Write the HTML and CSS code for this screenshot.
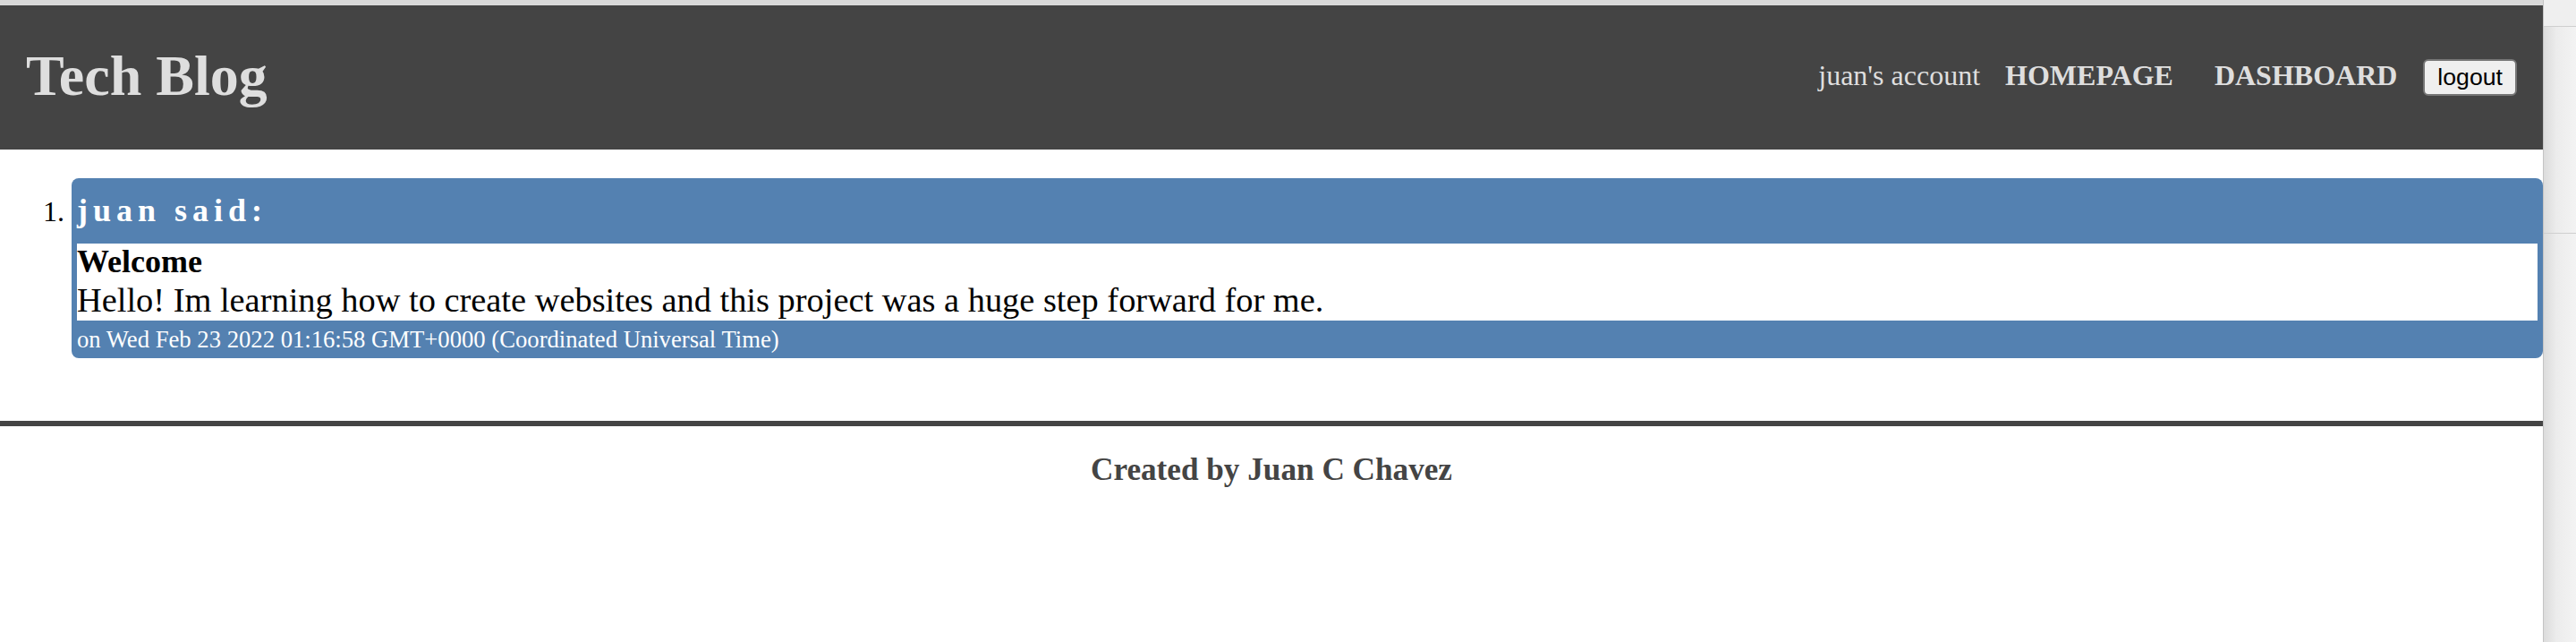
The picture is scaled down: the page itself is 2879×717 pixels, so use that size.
FILE: index.html
```html
<!DOCTYPE html>
<html lang="en">
<head>
<meta charset="utf-8">
<title>Tech Blog</title>
<link rel="stylesheet" href="styles.css">
</head>
<body>
<div class="window">
  <div class="page">
    <div class="topstrip"></div>
    <header class="site-header">
      <h1 class="site-title">Tech Blog</h1>
      <nav class="site-nav">
        <span class="account">juan's account</span>
        <a class="nav-link nav-home" href="#">HOMEPAGE</a>
        <a class="nav-link nav-dash" href="#">DASHBOARD</a>
        <button class="logout" type="button">logout</button>
      </nav>
    </header>
    <main class="content">
      <ol class="posts">
        <li class="post">
          <div class="post-head">juan said:</div>
          <div class="post-body">
            <div class="post-title">Welcome</div>
            <div class="post-text">Hello! Im learning how to create websites and this project was a huge step forward for me.</div>
          </div>
          <div class="post-date">on Wed Feb 23 2022 01:16:58 GMT+0000 (Coordinated Universal Time)</div>
        </li>
      </ol>
    </main>
    <footer class="site-footer">
      <h3 class="credit">Created by Juan C Chavez</h3>
    </footer>
  </div>
  <div class="scrollbar">
    <div class="sb-top"></div>
    <div class="sb-thumb"></div>
    <div class="sb-rest"></div>
  </div>
</div>
</body>
</html>
```

FILE: styles.css
```css
html, body {
  margin: 0;
  padding: 0;
  background: #ffffff;
}

body {
  font-family: "Liberation Serif", "Times New Roman", serif;
  font-size: 32px;
  color: #000;
}

.window {
  display: flex;
  height: 717px;
  overflow: hidden;
}

.page {
  flex: 1;
  min-width: 0;
  display: flex;
  flex-direction: column;
}

.topstrip {
  height: 6px;
  background: #d9d9d9;
}

.site-header {
  height: 161px;
  background: #444444;
  display: flex;
  justify-content: space-between;
  align-items: flex-start;
  padding: 0 29px 0 29px;
  box-sizing: border-box;
}

.site-title {
  margin: 43px 0 0 0;
  font-size: 64px;
  line-height: 72px;
  font-weight: bold;
  color: #dedede;
}

.site-nav {
  display: flex;
  align-items: flex-start;
  margin-top: 60px;
}

.account {
  color: #dedede;
  font-size: 32px;
  line-height: 37px;
  margin-right: 28px;
}

.nav-link {
  color: #dedede;
  font-size: 32px;
  line-height: 37px;
  font-weight: bold;
  text-decoration: none;
}

.nav-home {
  margin-right: 46px;
}

.nav-dash {
  margin-right: 29px;
}

.logout {
  height: 41px;
  box-sizing: border-box;
  padding: 0 14px;
  margin: 0;
  font-family: "Liberation Sans", Arial, sans-serif;
  font-size: 26.67px;
  color: #000;
  background: #efefef;
  border: 2px solid #767676;
  border-radius: 6px;
}

.content {
  display: block;
}

.posts {
  margin: 32px 0 70px 0;
  padding: 0 0 0 80px;
  list-style: decimal;
}

.post {
  background: #5481b1;
  border-radius: 8px;
  padding: 6px;
  font-size: 32px;
}

.post-head {
  color: #ffffff;
  font-weight: bold;
  font-size: 36px;
  line-height: 37px;
  letter-spacing: 6px;
  padding: 12px 0 18px 0;
}

.post-body {
  background: #ffffff;
}

.post-title {
  font-weight: bold;
  font-size: 36px;
  line-height: 40px;
}

.post-text {
  font-size: 38.4px;
  line-height: 46px;
}

.post-date {
  color: #ffffff;
  font-size: 26.67px;
  line-height: 30px;
  padding-top: 6px;
}

.site-footer {
  border-top: 6px solid #444444;
  padding-top: 27px;
  text-align: center;
}

.credit {
  margin: 0;
  font-size: 35.2px;
  line-height: 43px;
  font-weight: bold;
  color: #444444;
}

.scrollbar {
  width: 37px;
  display: flex;
  flex-direction: column;
  border-left: 1px solid #c4c4c4;
  box-sizing: border-box;
}

.sb-top {
  height: 29px;
  background: #efefef;
  border-bottom: 1px solid #cfcfcf;
}

.sb-thumb {
  height: 230px;
  background: linear-gradient(to right, #dcdcdc, #ececec 40%, #f3f3f3);
  border-bottom: 1px solid #cfcfcf;
}

.sb-rest {
  flex: 1;
  background: linear-gradient(to right, #dcdcdc, #ececec 40%, #f3f3f3);
}
```
